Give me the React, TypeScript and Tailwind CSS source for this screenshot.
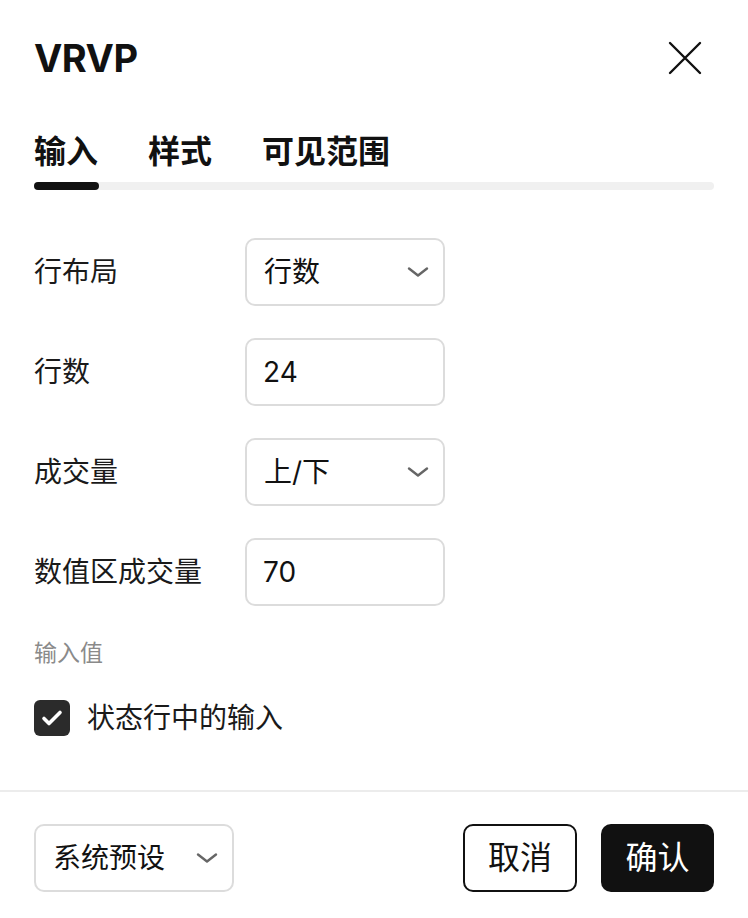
import { useState } from 'react'

const FONT = 'font-["Inter","Noto_Sans_CJK_SC",sans-serif]'

function Chevron() {
  return (
    <svg width="22" height="14" viewBox="0 0 22 14" fill="none">
      <path d="M2 3.5l9 7 9-7" stroke="#666" strokeWidth="2.4" strokeLinecap="round" strokeLinejoin="round" />
    </svg>
  )
}

function SelectBox({ value, className = '' }: { value: string; className?: string }) {
  return (
    <div
      className={`flex h-[68px] w-[200px] items-center justify-between rounded-[10px] border-2 border-[#dcdcdc] pl-[17px] pr-[14px] text-[28px] text-[#111] ${className}`}
    >
      <span>{value}</span>
      <Chevron />
    </div>
  )
}

function InputBox({ value }: { value: string }) {
  return (
    <div className="flex h-[68px] w-[200px] items-center rounded-[10px] border-2 border-[#dcdcdc] pl-[16px] text-[28px] text-[#111]">
      {value}
    </div>
  )
}

export default function App() {
  const [tab, setTab] = useState(0)
  const [checked, setChecked] = useState(true)
  const tabs = ['输入', '样式', '可见范围']

  const rows: { label: string; kind: 'select' | 'input'; value: string }[] = [
    { label: '行布局', kind: 'select', value: '行数' },
    { label: '行数', kind: 'input', value: '24' },
    { label: '成交量', kind: 'select', value: '上/下' },
    { label: '数值区成交量', kind: 'input', value: '70' },
  ]

  return (
    <div className={`${FONT} flex h-[918px] w-[748px] flex-col bg-white text-[#111]`}>
      {/* Header */}
      <div className="flex items-center justify-between px-[34px] pt-[36px]">
        <h1 className="text-[38px] font-bold leading-[44px] tracking-[-0.5px]">VRVP</h1>
        <button className="mr-[12px] flex h-[34px] w-[34px] items-center justify-center">
          <svg width="34" height="34" viewBox="0 0 34 34" fill="none">
            <path d="M2 2l30 30M32 2L2 32" stroke="#111" strokeWidth="2.4" strokeLinecap="round" />
          </svg>
        </button>
      </div>

      {/* Tabs */}
      <div className="mt-[52px] px-[34px]">
        <div className="flex gap-[50px]">
          {tabs.map((t, i) => (
            <button
              key={t}
              onClick={() => setTab(i)}
              className="text-[32px] font-bold leading-[40px]"
            >
              {t}
            </button>
          ))}
        </div>
        <div className="mt-[10px] h-[8px] w-full rounded-full bg-[#f0f0f0]">
          <div className="h-[8px] w-[65px] rounded-full bg-[#111]" style={{ marginLeft: tab === 0 ? 0 : tab === 1 ? 114 : 228 }} />
        </div>
      </div>

      {/* Form */}
      <div className="mt-[48px] flex flex-col gap-[32px] px-[34px]">
        {rows.map(r => (
          <div key={r.label} className="flex items-center">
            <span className="w-[211px] text-[28px] text-[#1a1a1a]">{r.label}</span>
            {r.kind === 'select' ? <SelectBox value={r.value} /> : <InputBox value={r.value} />}
          </div>
        ))}
      </div>

      <div className="mt-[32px] px-[34px] text-[23px] leading-[30px] text-[#8a8a8a]">输入值</div>

      <label className="mt-[29px] flex items-center gap-[17px] px-[34px]">
        <button
          onClick={() => setChecked(!checked)}
          className="flex h-[36px] w-[36px] items-center justify-center rounded-[6px] bg-[#2b2b2b]"
        >
          {checked && (
            <svg width="22" height="18" viewBox="0 0 22 18" fill="none">
              <path d="M3 9.5l5 5L19 3.5" stroke="white" strokeWidth="3.6" strokeLinecap="round" strokeLinejoin="round" />
            </svg>
          )}
        </button>
        <span className="text-[28px] text-[#1a1a1a]">状态行中的输入</span>
      </label>

      {/* Footer */}
      <div className="mt-auto border-t-2 border-[#ececec] px-[34px] pt-[32px] pb-[26px]">
        <div className="flex items-center justify-between">
          <SelectBox value="系统预设" />
          <div className="flex gap-[24px]">
            <button className="h-[68px] w-[114px] rounded-[10px] border-2 border-[#111] text-[32px] text-[#111]">
              取消
            </button>
            <button className="h-[68px] w-[113px] rounded-[10px] bg-[#111] text-[32px] text-white">
              确认
            </button>
          </div>
        </div>
      </div>
    </div>
  )
}
